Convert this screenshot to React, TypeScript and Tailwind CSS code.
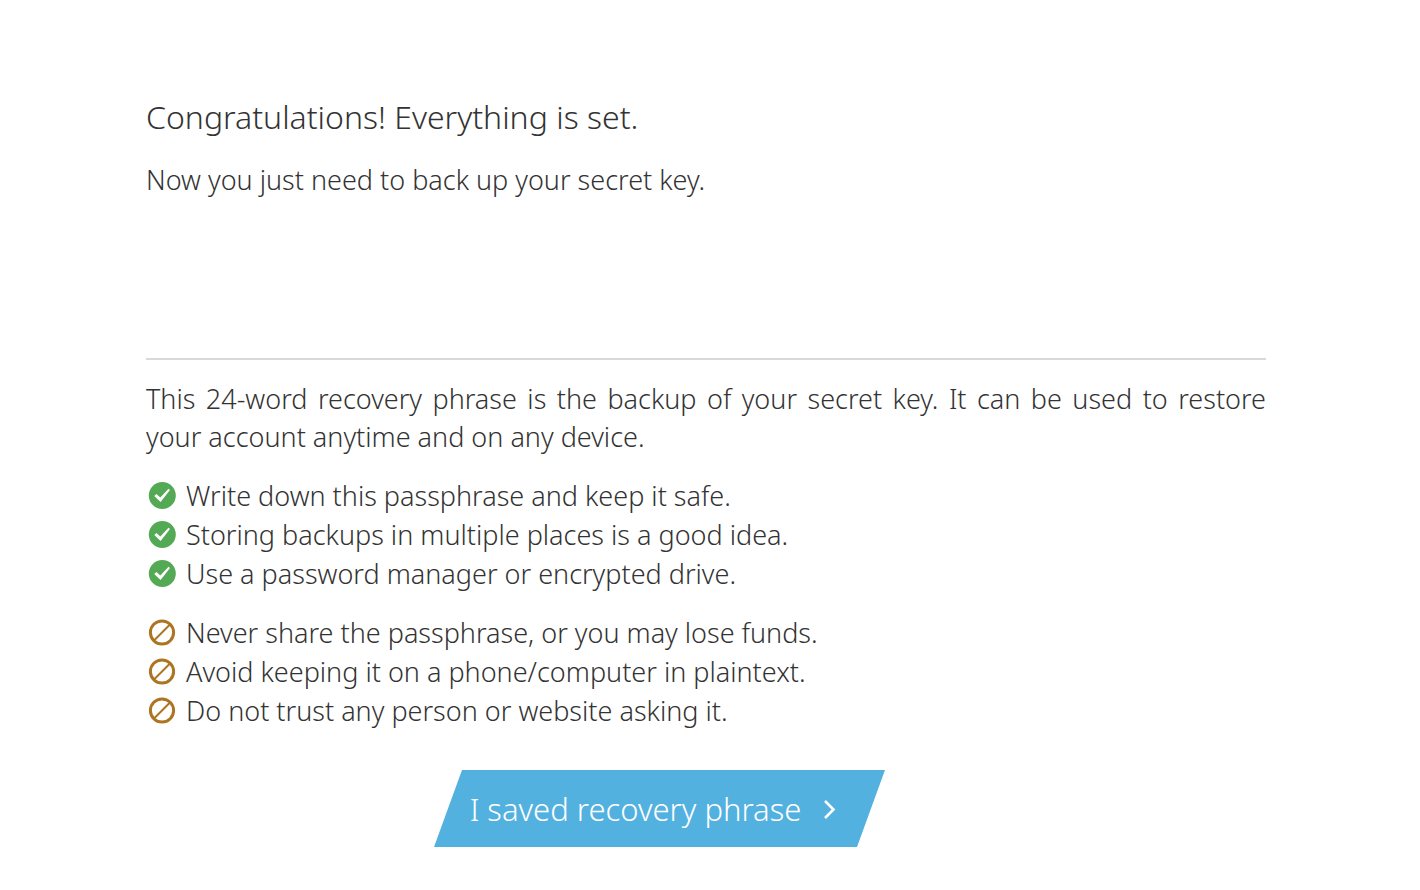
const recommended = [
  'Write down this passphrase and keep it safe.',
  'Storing backups in multiple places is a good idea.',
  'Use a password manager or encrypted drive.',
];

const discouraged = [
  'Never share the passphrase, or you may lose funds.',
  'Avoid keeping it on a phone/computer in plaintext.',
  'Do not trust any person or website asking it.',
];

function CheckIcon() {
  return (
    <svg className="size-8 shrink-0" viewBox="0 0 32 32" fill="none" aria-hidden="true">
      <circle cx="16.3" cy="15.5" r="13.5" fill="#54a954" />
      <path d="M8.2 15.9l2.2-1.8 3.9 3.3 8.2-8.6 1.5 1.3-9.4 12z" fill="#fff" />
    </svg>
  );
}

function ForbiddenIcon() {
  return (
    <svg className="size-8 shrink-0" viewBox="0 0 32 32" fill="none" stroke="#ad7421" aria-hidden="true">
      <circle cx="16" cy="15.5" r="11.6" strokeWidth="3" />
      <path d="M8 23.5L24 7.5" strokeWidth="2" />
    </svg>
  );
}

function Tips({ items, icon }: { items: string[]; icon: 'check' | 'forbidden' }) {
  return (
    <ul>
      {items.map((item) => (
        <li key={item} className="flex h-[39px] items-center gap-2">
          {icon === 'check' ? <CheckIcon /> : <ForbiddenIcon />}
          <span>{item}</span>
        </li>
      ))}
    </ul>
  );
}

export default function App() {
  return (
    <main className="min-h-screen bg-white pt-[95px] pr-[154px] pb-10 pl-[146px] font-['Noto_Sans',sans-serif] text-[27px] leading-[38px] font-light text-[#333]">
      <header className="h-[263px]">
        <h1 className="text-[32px] leading-[44px] font-light">Congratulations! Everything is set.</h1>
        <p className="mt-[22px]">Now you just need to back up your secret key.</p>
      </header>
      <hr className="border-t-2 border-[#d9d9d9]" />
      <section className="mt-5 flex flex-col gap-5">
        <p className="text-justify">
          This 24-word recovery phrase is the backup of your secret key. It can be used to restore your account anytime and on any device.
        </p>
        <Tips items={recommended} icon="check" />
        <Tips items={discouraged} icon="forbidden" />
      </section>
      <div className="mt-10 flex justify-center pr-[93px]">
        <button
          type="button"
          className="flex h-[77px] w-[451px] items-center justify-center gap-4 bg-[#53b1e0] pr-2 text-[31px] font-light whitespace-nowrap text-white [clip-path:polygon(28px_0,100%_0,calc(100%_-_28px)_100%,0_100%)]"
        >
          I saved recovery phrase
          <svg className="size-6" viewBox="0 0 24 24" fill="none" stroke="currentColor" strokeWidth="2.6" aria-hidden="true">
            <path d="M8 4l8.5 8.5-8.5 8.5" />
          </svg>
        </button>
      </div>
    </main>
  );
}
